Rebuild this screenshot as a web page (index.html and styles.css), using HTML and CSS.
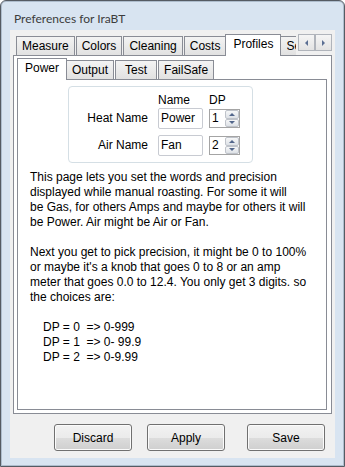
FILE: index.html
```html
<!DOCTYPE html>
<html lang="en">
<head>
    <meta charset="UTF-8">
    <meta name="viewport" content="width=device-width, initial-scale=1.0">
    <title>Preferences for IraBT</title>
    <link rel="stylesheet" href="styles.css">
</head>
<body>
    <div class="window">
        <div class="title">Preferences for IraBT</div>

        <div class="client">
            <div class="tabs outer-tabs">
                <div class="tab-row">
                    <span class="tab">Measure</span>
                    <span class="tab">Colors</span>
                    <span class="tab">Cleaning</span>
                    <span class="tab">Costs</span>
                    <span class="tab active">Profiles</span>
                    <span class="tab">Setup</span>
                </div>
                <div class="tab-scroll">
                    <span class="scroll-btn"><i class="arrow-left"></i></span>
                    <span class="scroll-btn"><i class="arrow-right"></i></span>
                </div>

                <div class="tab-panel outer-panel">
                    <div class="tabs inner-tabs">
                        <div class="tab-row">
                            <span class="tab active">Power</span>
                            <span class="tab">Output</span>
                            <span class="tab">Test</span>
                            <span class="tab">FailSafe</span>
                        </div>

                        <div class="tab-panel inner-panel">
                            <div class="group">
                                <div class="fields">
                                    <span></span>
                                    <span class="head">Name</span>
                                    <span class="head">DP</span>

                                    <span class="field-label">Heat Name</span>
                                    <div class="textbox">Power</div>
                                    <div class="spin">
                                        <span class="spin-value">1</span>
                                        <span class="spin-btns">
                                            <span class="spin-btn"><i class="arrow-up"></i></span>
                                            <span class="spin-btn"><i class="arrow-down"></i></span>
                                        </span>
                                    </div>

                                    <span class="field-label">Air Name</span>
                                    <div class="textbox">Fan</div>
                                    <div class="spin">
                                        <span class="spin-value">2</span>
                                        <span class="spin-btns">
                                            <span class="spin-btn"><i class="arrow-up"></i></span>
                                            <span class="spin-btn"><i class="arrow-down"></i></span>
                                        </span>
                                    </div>
                                </div>
                            </div>

                            <div class="help">
                                <p>This page lets you set the words and precision<br>displayed while manual roasting. For some it will<br>be Gas, for others Amps and maybe for others it will<br>be Power. Air might be Air or Fan.</p>
                                <p>Next you get to pick precision, it might be 0 to 100%<br>or maybe it's a knob that goes 0 to 8 or an amp<br>meter that goes 0.0 to 12.4. You only get 3 digits. so<br>the choices are:</p>
                                <p class="dp">DP = 0  =&gt; 0-999<br>DP = 1  =&gt; 0- 99.9<br>DP = 2  =&gt; 0-9.99</p>
                            </div>
                        </div>
                    </div>
                </div>
            </div>

            <div class="buttons">
                <button class="btn">Discard</button>
                <button class="btn btn-apply">Apply</button>
                <button class="btn btn-save">Save</button>
            </div>
        </div>
    </div>
</body>
</html>
```

FILE: styles.css
```css
body {
    margin: 0;
    background-color: #fff;
    font-family: "Liberation Sans", Arial, sans-serif;
    font-size: 12px;
    color: #000;
}

.window {
    box-sizing: border-box;
    width: 345px;
    height: 467px;
    display: flex;
    flex-direction: column;
    padding: 0 9px 8px;
    border: 1px solid #555b63;
    border-radius: 6px 6px 0 0;
    background-color: #d8e4f1;
    box-shadow: inset 0 0 0 1px #aebdcd;
}

.title {
    box-sizing: border-box;
    height: 29px;
    padding: 10px 0 0 4px;
    font-family: Lato, "Noto Sans", sans-serif;
    font-size: 12px;
    line-height: 16px;
    color: #3c3c3c;
}

.client {
    flex: 1;
    display: flex;
    flex-direction: column;
    padding: 4px 3px 7px;
    background-color: #f0f0f0;
}

/* tab controls */

.tabs {
    display: flex;
    flex-direction: column;
}

.outer-tabs {
    flex: 1;
    position: relative;
}

.tab-row {
    display: flex;
    align-items: flex-end;
    height: 22px;
    margin-bottom: -1px;
    position: relative;
    z-index: 1;
    overflow: hidden;
}

.outer-tabs > .tab-row {
    padding-left: 3px;
    margin-right: 36px;
}

.inner-tabs > .tab-row {
    padding-left: 2px;
}

.tab {
    box-sizing: border-box;
    flex: none;
    min-width: 42px;
    height: 19px;
    margin: 0 1px 1px 0;
    padding: 1px 5px 0;
    border: 1px solid #898c95;
    border-bottom: none;
    background: linear-gradient(#f3f3f3, #e1e1e1);
    line-height: 17px;
    text-align: center;
    white-space: nowrap;
}

.tab.active {
    height: 22px;
    margin: 0 -1px 0 -2px;
    padding: 1px 7px 0;
    background: #fff;
}

.tab-scroll {
    position: absolute;
    top: 0;
    right: 0;
    display: flex;
}

.scroll-btn {
    box-sizing: border-box;
    width: 17px;
    height: 17px;
    display: flex;
    align-items: center;
    justify-content: center;
    border: 1px solid #b0b4bb;
    background: linear-gradient(#f5f5f5, #e3e3e3);
}

.arrow-left {
    border-top: 3px solid transparent;
    border-bottom: 3px solid transparent;
    border-right: 3px solid #5b6f93;
}

.arrow-right {
    border-top: 3px solid transparent;
    border-bottom: 3px solid transparent;
    border-left: 3px solid #5b6f93;
}

.tab-panel {
    flex: 1;
    border: 1px solid #898c95;
    background-color: #fff;
}

.outer-panel {
    display: flex;
    flex-direction: column;
    padding: 2px 4px 3px 3px;
}

.inner-tabs {
    flex: 1;
}

.inner-panel {
    padding-top: 6px;
}

/* name / precision group */

.group {
    box-sizing: border-box;
    width: 185px;
    margin: 0 0 7px 50px;
    padding: 6px 0;
    border: 1px solid #d5dfe5;
    border-radius: 4px;
}

.fields {
    display: grid;
    grid-template-columns: 89px 51px 32px;
    grid-template-rows: 15px 27px 21px;
    line-height: 15px;
}

.field-label {
    padding-right: 10px;
    line-height: 21px;
    text-align: right;
    white-space: nowrap;
}

.textbox {
    box-sizing: border-box;
    width: 45px;
    height: 21px;
    padding-left: 2px;
    border: 1px solid #c8cbd2;
    border-radius: 2px;
    line-height: 19px;
}

.spin {
    box-sizing: border-box;
    display: flex;
    width: 31px;
    height: 19px;
    margin-top: 1px;
    border: 1px solid #a4a4a4;
}

.spin-value {
    flex: 1;
    padding-left: 2px;
    line-height: 17px;
}

.spin-btns {
    display: flex;
    flex-direction: column;
    width: 14px;
}

.spin-btn {
    flex: 1;
    display: flex;
    align-items: center;
    justify-content: center;
    border: 1px solid #bfc3ca;
    border-radius: 2px;
    background: linear-gradient(#f6f7f8, #dde1e6);
}

.arrow-up {
    border-left: 3px solid transparent;
    border-right: 3px solid transparent;
    border-bottom: 3px solid #52668b;
}

.arrow-down {
    border-left: 3px solid transparent;
    border-right: 3px solid transparent;
    border-top: 3px solid #52668b;
}

/* help text */

.help {
    margin-left: 12px;
    line-height: 15px;
    white-space: nowrap;
}

.help p {
    margin: 0 0 15px;
}

.help .dp {
    padding-left: 13px;
    white-space: pre;
}

/* dialog buttons */

.buttons {
    display: flex;
    height: 27px;
    margin-top: 10px;
    padding-left: 41px;
}

.btn {
    box-sizing: border-box;
    width: 78px;
    height: 27px;
    padding: 0;
    border: 1px solid #707070;
    border-radius: 3px;
    background: linear-gradient(#f2f2f2, #ebebeb 50%, #dddddd 50%, #cfcfcf);
    box-shadow: inset 0 0 0 1px #fbfbfb;
    font-family: "Liberation Sans", Arial, sans-serif;
    font-size: 12px;
    color: #000;
}

.btn-apply {
    margin-left: 15px;
}

.btn-save {
    margin-left: 22px;
}
```
